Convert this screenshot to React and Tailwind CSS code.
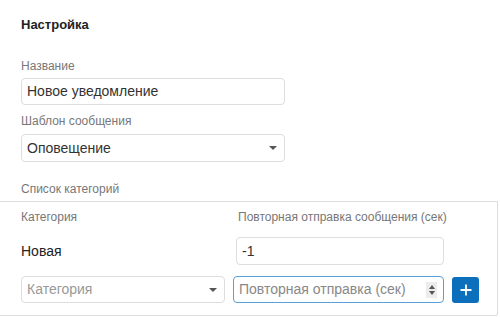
import React from 'react';

const Caret = () => (
  <span className="w-0 h-0 border-l-[4px] border-r-[4px] border-t-[4px] border-l-transparent border-r-transparent border-t-[#555]" />
);

const Spinner = () => (
  <span className="flex flex-col items-center justify-center gap-[2px] w-[11px] h-[16px] bg-[#ececec]">
    <span className="w-0 h-0 border-l-[3px] border-r-[3px] border-b-[4px] border-l-transparent border-r-transparent border-b-[#555]" />
    <span className="w-0 h-0 border-l-[3px] border-r-[3px] border-t-[4px] border-l-transparent border-r-transparent border-t-[#555]" />
  </span>
);

const App = () => {
  return (
    <div className="w-[500px] h-[317px] bg-white overflow-hidden font-['Liberation_Sans',Arial,sans-serif] text-[#333]">
      {/* Settings */}
      <div className="pl-[21px] pt-[16px]">
        <h3 className="text-[13px] font-bold leading-[18px] text-[#222]">Настройка</h3>

        <div className="mt-[25px] text-[12px] leading-[14px] text-[#777]">Название</div>
        <div className="mt-[5px] w-[264px] h-[27px] border border-[#ddd] rounded-[4px] flex items-center px-[5px] text-[14px]">
          Новое уведомление
        </div>

        <div className="mt-[9px] text-[12px] leading-[14px] text-[#777]">Шаблон сообщения</div>
        <div className="mt-[6px] w-[264px] h-[28px] border border-[#ddd] rounded-[4px] flex items-center justify-between pl-[5px] pr-[7px] text-[14px]">
          <span>Оповещение</span>
          <Caret />
        </div>

        <div className="mt-[20px] text-[12px] leading-[14px] text-[#777]">Список категорий</div>
      </div>

      {/* Categories table */}
      <div className="mt-[5px] w-[498px] h-[115px] border-t border-r border-b border-[#ddd] rounded-br-[3px] pl-[21px]">
        <div className="flex pt-[8px] text-[12px] leading-[14px] text-[#777]">
          <span className="w-[217px]">Категория</span>
          <span>Повторная отправка сообщения (сек)</span>
        </div>

        <div className="flex items-center mt-[13px]">
          <span className="w-[215px] text-[14px] text-[#222]">Новая</span>
          <div className="w-[208px] h-[28px] border border-[#ddd] rounded-[4px] flex items-center px-[5px] text-[14px]">-1</div>
        </div>

        <div className="flex items-center mt-[11px]">
          <div className="w-[204px] h-[27px] border border-[#ddd] rounded-[4px] flex items-center justify-between pl-[5px] pr-[7px] text-[14px] text-[#999]">
            <span>Категория</span>
            <Caret />
          </div>
          <div className="ml-[8px] w-[211px] h-[27px] border border-[#5a9fd8] rounded-[4px] flex items-center justify-between pl-[5px] pr-[6px] text-[14px] text-[#888]">
            <span>Повторная отправка (сек)</span>
            <Spinner />
          </div>
          <button className="ml-[8px] w-[27px] h-[26px] bg-[#0b6fbc] rounded-[3px] flex items-center justify-center">
            <svg width="12" height="12" viewBox="0 0 12 12">
              <path d="M6 0.5v11M0.5 6h11" stroke="white" strokeWidth="1.8" />
            </svg>
          </button>
        </div>
      </div>
    </div>
  );
};

export default App;
